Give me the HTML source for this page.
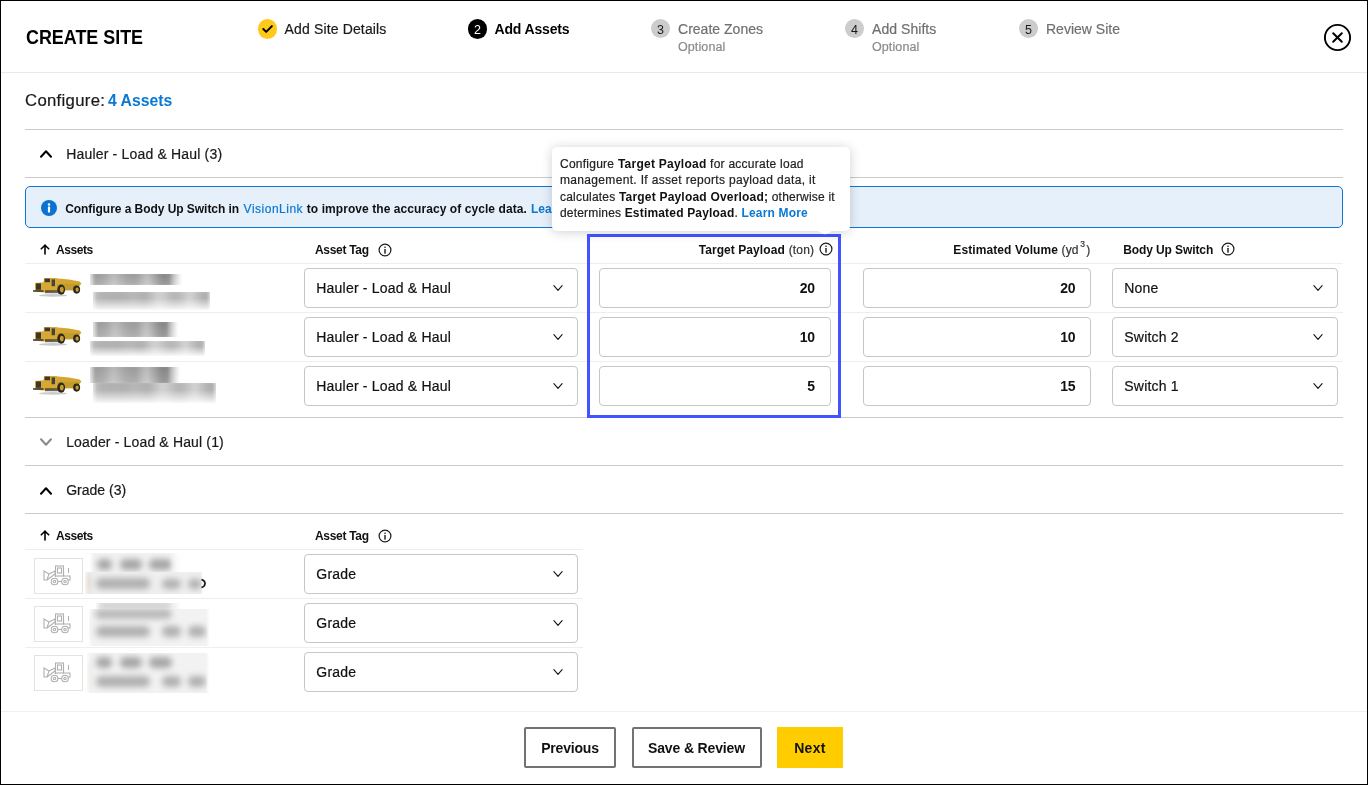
<!DOCTYPE html>
<html><head><meta charset="utf-8"><title>Create Site</title>
<style>
html,body{margin:0;padding:0;}
body{width:1368px;height:785px;overflow:hidden;position:relative;background:#fff;font-family:"Liberation Sans", sans-serif;}
.t{position:absolute;white-space:nowrap;font-family:"Liberation Sans", sans-serif;}
.b{position:absolute;}
b{font-weight:700;color:#111;-webkit-text-stroke:0;}
.root{position:absolute;left:0;top:0;width:1368px;height:785px;overflow:hidden;background:#fff;will-change:transform;}
.frame{position:absolute;left:0;top:0;width:1368px;height:785px;box-sizing:border-box;border:1px solid #000;pointer-events:none;}
</style></head>
<body>
<div class="root">
<div class="t" style="left:25.60px;top:26.97px;font-size:20px;line-height:20px;font-weight:700;color:#000;letter-spacing:0px;transform:scaleX(0.895);transform-origin:0 0;">CREATE SITE</div>
<div class="b" style="left:257.5px;top:19.15px;width:19.5px;height:19.5px;border-radius:50%;background:#ffc91a"></div>
<svg class="b" style="left:258px;top:19.4px;" width="19" height="19" viewBox="0 0 19 19"><polyline points="5.3,10 8.2,12.9 13.9,7.1" fill="none" stroke="#000" stroke-width="2" stroke-linecap="round" stroke-linejoin="round"/></svg>
<div class="t" style="left:284.50px;top:22.05px;font-size:14px;line-height:14px;font-weight:400;color:#1a1a1a;letter-spacing:0.15px;-webkit-text-stroke:0.2px currentColor;">Add Site Details</div>
<div class="b" style="left:467.75px;top:19.45px;width:19.5px;height:19.5px;border-radius:50%;background:#000;"></div>
<div class="t" style="left:467.75px;top:21.05px;width:19.5px;height:19.5px;line-height:19.5px;text-align:center;font-size:12.5px;font-weight:400;color:#fff">2</div>
<div class="t" style="left:494.50px;top:22.05px;font-size:14px;line-height:14px;font-weight:700;color:#000;letter-spacing:-0.15px;">Add Assets</div>
<div class="b" style="left:651.0px;top:19.4px;width:19px;height:19px;border-radius:50%;background:#cccccc;"></div>
<div class="t" style="left:651.0px;top:21.0px;width:19px;height:19px;line-height:19px;text-align:center;font-size:12.5px;font-weight:400;color:#1a1a1a">3</div>
<div class="t" style="left:678.00px;top:22.05px;font-size:14px;line-height:14px;font-weight:400;color:#707070;letter-spacing:0.02px;-webkit-text-stroke:0.2px currentColor;">Create Zones</div>
<div class="t" style="left:678.00px;top:41.42px;font-size:12.5px;line-height:12.5px;font-weight:400;color:#8a8a8a;letter-spacing:0.1px;-webkit-text-stroke:0.2px currentColor;">Optional</div>
<div class="b" style="left:845.0px;top:19.4px;width:19px;height:19px;border-radius:50%;background:#cccccc;"></div>
<div class="t" style="left:845.0px;top:21.0px;width:19px;height:19px;line-height:19px;text-align:center;font-size:12.5px;font-weight:400;color:#1a1a1a">4</div>
<div class="t" style="left:872.00px;top:22.05px;font-size:14px;line-height:14px;font-weight:400;color:#707070;letter-spacing:0.05px;-webkit-text-stroke:0.2px currentColor;">Add Shifts</div>
<div class="t" style="left:872.00px;top:41.42px;font-size:12.5px;line-height:12.5px;font-weight:400;color:#8a8a8a;letter-spacing:0.1px;-webkit-text-stroke:0.2px currentColor;">Optional</div>
<div class="b" style="left:1019.0px;top:19.4px;width:19px;height:19px;border-radius:50%;background:#cccccc;"></div>
<div class="t" style="left:1019.0px;top:21.0px;width:19px;height:19px;line-height:19px;text-align:center;font-size:12.5px;font-weight:400;color:#1a1a1a">5</div>
<div class="t" style="left:1046.00px;top:22.05px;font-size:14px;line-height:14px;font-weight:400;color:#707070;letter-spacing:0.0px;-webkit-text-stroke:0.2px currentColor;">Review Site</div>
<svg class="b" style="left:1322px;top:22px;" width="31" height="31" viewBox="0 0 31 31"><circle cx="15.5" cy="15.5" r="12.6" fill="none" stroke="#000" stroke-width="1.9"/><path d="M11.2 11.2 L19.8 19.8 M19.8 11.2 L11.2 19.8" stroke="#000" stroke-width="2" stroke-linecap="round"/></svg>
<div class="b" style="left:0px;top:72px;width:1368px;height:1px;background:#e9e9e9"></div>
<div class="t" style="left:25.30px;top:92.56px;font-size:16px;line-height:16px;font-weight:400;color:#1a1a1a;letter-spacing:0.3px;transform:scaleX(1.045);transform-origin:0 0;-webkit-text-stroke:0.2px currentColor;">Configure:</div>
<div class="t" style="left:108.30px;top:92.56px;font-size:16px;line-height:16px;font-weight:700;color:#0a78d4;letter-spacing:0px;transform:scaleX(0.985);transform-origin:0 0;">4 Assets</div>
<div class="b" style="left:25px;top:129px;width:1318px;height:1px;background:#cbcbcb"></div>
<svg class="b" style="left:38px;top:146.2px;" width="16" height="16" viewBox="0 0 16 16"><polyline points="3.0,10.75 8,5.25 13.0,10.75" fill="none" stroke="#000" stroke-width="2" stroke-linecap="round" stroke-linejoin="round"/></svg>
<div class="t" style="left:66.20px;top:147.25px;font-size:14px;line-height:14px;font-weight:400;color:#1a1a1a;letter-spacing:0.18px;-webkit-text-stroke:0.2px currentColor;">Hauler - Load &amp; Haul (3)</div>
<div class="b" style="left:25px;top:177px;width:1318px;height:1px;background:#cbcbcb"></div>
<div class="b" style="left:25px;top:186px;width:1318px;height:42px;box-sizing:border-box;border:1.5px solid #0f74d4;border-radius:5px;background:#e6f0fa"></div>
<svg class="b" style="left:41px;top:200px;" width="16" height="16" viewBox="0 0 16 16"><circle cx="8" cy="8" r="8" fill="#0b72d0"/><rect x="6.9" y="6.6" width="2.2" height="5.8" rx="0.3" fill="#fff"/><circle cx="8" cy="4.4" r="1.25" fill="#fff"/></svg>
<div class="t" style="left:65.20px;top:202.84px;font-size:12px;line-height:12px;font-weight:700;color:#111;letter-spacing:-0.05px;">Configure a Body Up Switch in</div>
<div class="t" style="left:243.60px;top:202.84px;font-size:12px;line-height:12px;font-weight:400;color:#0a78d4;letter-spacing:0.5px;-webkit-text-stroke:0.2px currentColor;">VisionLink</div>
<div class="t" style="left:306.80px;top:202.84px;font-size:12px;line-height:12px;font-weight:700;color:#111;letter-spacing:0.07px;">to improve the accuracy of cycle data.</div>
<div class="t" style="left:531.00px;top:202.84px;font-size:12px;line-height:12px;font-weight:700;color:#0a78d4;letter-spacing:0.0px;">Learn More</div>
<svg class="b" style="left:39.5px;top:243.8px;" width="10" height="11" viewBox="0 0 10 11"><path d="M5 1.2 V10" stroke="#000" stroke-width="1.6" stroke-linecap="round"/><polyline points="1.3,4.8 5,1.2 8.7,4.8" fill="none" stroke="#000" stroke-width="1.6" stroke-linecap="round" stroke-linejoin="round"/></svg>
<div class="t" style="left:56.00px;top:243.64px;font-size:12px;line-height:12px;font-weight:700;color:#111;letter-spacing:-0.43px;">Assets</div>
<div class="t" style="left:315.00px;top:243.64px;font-size:12px;line-height:12px;font-weight:700;color:#111;letter-spacing:-0.3px;">Asset Tag</div>
<svg class="b" style="left:377.0px;top:241.9px;" width="16" height="16" viewBox="0 0 16 16"><circle cx="8.0" cy="8.0" r="5.9" fill="none" stroke="#1a1a1a" stroke-width="1.2"/><rect x="7.3" y="7.0" width="1.4" height="4.7" fill="#1a1a1a"/><rect x="7.3" y="4.6" width="1.4" height="1.3" fill="#1a1a1a"/></svg>
<div class="t" style="left:698.70px;top:243.64px;font-size:12px;line-height:12px;font-weight:700;color:#111;letter-spacing:0.07px;">Target Payload</div>
<div class="t" style="left:788.70px;top:243.64px;font-size:12px;line-height:12px;font-weight:400;color:#333;letter-spacing:0.16px;-webkit-text-stroke:0.2px currentColor;">(ton)</div>
<svg class="b" style="left:818.0px;top:240.9px;" width="16" height="16" viewBox="0 0 16 16"><circle cx="8.0" cy="8.0" r="5.9" fill="none" stroke="#1a1a1a" stroke-width="1.2"/><rect x="7.3" y="7.0" width="1.4" height="4.7" fill="#1a1a1a"/><rect x="7.3" y="4.6" width="1.4" height="1.3" fill="#1a1a1a"/></svg>
<div class="t" style="left:953.30px;top:243.64px;font-size:12px;line-height:12px;font-weight:700;color:#111;letter-spacing:0.1px;">Estimated Volume</div>
<div class="t" style="left:1061.60px;top:243.64px;font-size:12px;line-height:12px;font-weight:400;color:#333;letter-spacing:0.1px;-webkit-text-stroke:0.2px currentColor;">(yd</div>
<div class="t" style="left:1080.30px;top:240.40px;font-size:8.5px;line-height:8.5px;font-weight:400;color:#333;letter-spacing:0px;-webkit-text-stroke:0.2px currentColor;">3</div>
<div class="t" style="left:1086.20px;top:243.64px;font-size:12px;line-height:12px;font-weight:400;color:#333;letter-spacing:0px;-webkit-text-stroke:0.2px currentColor;">)</div>
<div class="t" style="left:1123.20px;top:243.64px;font-size:12px;line-height:12px;font-weight:700;color:#111;letter-spacing:-0.1px;">Body Up Switch</div>
<svg class="b" style="left:1220.0px;top:240.9px;" width="16" height="16" viewBox="0 0 16 16"><circle cx="8.0" cy="8.0" r="5.9" fill="none" stroke="#1a1a1a" stroke-width="1.2"/><rect x="7.3" y="7.0" width="1.4" height="4.7" fill="#1a1a1a"/><rect x="7.3" y="4.6" width="1.4" height="1.3" fill="#1a1a1a"/></svg>
<div class="b" style="left:25px;top:263px;width:1318px;height:1px;background:#eeeeee"></div>
<svg class="b" style="left:32px;top:276px;" width="51" height="22" viewBox="0 0 51 22">
<g transform="translate(1,1)">
<ellipse cx="20" cy="18.4" rx="14" ry="1.3" fill="#8a8a8a" opacity="0.45"/>
<path d="M25 1.4 L36 2.6 L46.6 4.4 L48.4 6.4 L46.8 8.8 L40 10.4 L27 11 Z" fill="#d3a531"/>
<path d="M2 6 L10.6 5.2 L11 0.9 L23.5 0.9 L27 2.6 L27.5 13.8 L10 15.6 L2 14.6 Z" fill="#d7a834"/>
<rect x="24" y="7" width="22" height="6.4" fill="#c49b2d"/>
<rect x="12" y="13.2" width="18" height="3" fill="#3a3529" opacity="0.75"/>
<rect x="3" y="6.4" width="5" height="6.4" fill="#3b372c"/>
<rect x="0" y="13.3" width="10.5" height="1.4" fill="#2a2a25"/>
<rect x="11.6" y="1.6" width="5.4" height="3.6" fill="#3a3a33"/>
<rect x="18.6" y="2.4" width="3.4" height="6.8" fill="#45443a"/>
<ellipse cx="28.2" cy="12.6" rx="3.9" ry="5.1" fill="#2b271d"/><ellipse cx="28.8" cy="12.6" rx="1.9" ry="2.8" fill="#c89d2c"/>
<ellipse cx="43.6" cy="12.6" rx="3.5" ry="4.1" fill="#2b271d"/><ellipse cx="44.1" cy="12.6" rx="1.6" ry="2.2" fill="#c89d2c"/>
</g>
</svg>
<div class="b" style="left:90px;top:273.8px;width:92.4px;height:11.7px;overflow:hidden;-webkit-mask-image:linear-gradient(90deg, rgba(0,0,0,0.35) 0px, #000 5px, #000 79.5px, rgba(0,0,0,0) 92.4px);mask-image:linear-gradient(90deg, rgba(0,0,0,0.35) 0px, #000 5px, #000 79.5px, rgba(0,0,0,0) 92.4px)"><div style="position:absolute;left:-5px;right:-5px;top:-3px;bottom:-3px;filter:blur(2.2px);background:linear-gradient(90deg,#c4c4c4 0%,#a2a2a2 12%,#adadad 20%,#c4c4c4 28%,#a8a8a8 40%,#a2a2a2 50%,#c8c8c8 61%,#8f8f8f 75%,#8a8a8a 80%,#b8b8b8 90%,#e0e0e0 100%)"></div><div style="position:absolute;left:0;right:0;top:0;bottom:0;background:linear-gradient(180deg,rgba(0,0,0,0.06),rgba(255,255,255,0.12))"></div></div>
<div class="b" style="left:93.2px;top:292px;width:116.7px;height:17.7px;overflow:hidden;-webkit-mask-image:linear-gradient(90deg, rgba(0,0,0,0.5) 0px, #000 4px, #000 113.7px, rgba(0,0,0,0.6) 116.7px);mask-image:linear-gradient(90deg, rgba(0,0,0,0.5) 0px, #000 4px, #000 113.7px, rgba(0,0,0,0.6) 116.7px)"><div style="position:absolute;left:-5px;right:-5px;top:-3px;bottom:-3px;filter:blur(2.5px);background:linear-gradient(90deg,#cfcfcf 0%,#b0b0b0 10%,#aeaeae 28%,#b6b6b6 36%,#acacac 45%,#d2d2d2 56%,#b2b2b2 68%,#bcbcbc 74%,#d4d4d4 80%,#a8a8a8 92%,#c4c4c4 100%)"></div><div style="position:absolute;left:0;right:0;top:0;bottom:0;background:linear-gradient(180deg,rgba(255,255,255,0) 0%,rgba(255,255,255,0.05) 35%,rgba(255,255,255,0.9) 100%)"></div></div>
<div class="b" style="left:304px;top:268px;width:274px;height:40px;box-sizing:border-box;border:1px solid #c6c6c6;border-radius:4px;background:#fff"></div>
<div class="t" style="left:316.30px;top:281.05px;font-size:14px;line-height:14px;font-weight:400;color:#111;letter-spacing:0.2px;-webkit-text-stroke:0.2px currentColor;">Hauler - Load &amp; Haul</div>
<svg class="b" style="left:550px;top:280.2px;" width="16" height="16" viewBox="0 0 16 16"><polyline points="3.9000000000000004,5.7 8,10.3 12.1,5.7" fill="none" stroke="#111" stroke-width="1.1" stroke-linecap="round" stroke-linejoin="round"/></svg>
<div class="b" style="left:599px;top:268px;width:232px;height:40px;box-sizing:border-box;border:1px solid #c6c6c6;border-radius:4px;background:#fff"></div>
<div class="t" style="right:553.00px;top:281.05px;font-size:14px;line-height:14px;font-weight:700;color:#111;letter-spacing:-0.1px;">20</div>
<div class="b" style="left:863px;top:268px;width:228px;height:40px;box-sizing:border-box;border:1px solid #c6c6c6;border-radius:4px;background:#fff"></div>
<div class="t" style="right:292.50px;top:281.05px;font-size:14px;line-height:14px;font-weight:700;color:#111;letter-spacing:-0.1px;">20</div>
<div class="b" style="left:1112px;top:268px;width:226px;height:40px;box-sizing:border-box;border:1px solid #c6c6c6;border-radius:4px;background:#fff"></div>
<div class="t" style="left:1124.30px;top:281.05px;font-size:14px;line-height:14px;font-weight:400;color:#111;letter-spacing:0.2px;-webkit-text-stroke:0.2px currentColor;">None</div>
<svg class="b" style="left:1310px;top:280.2px;" width="16" height="16" viewBox="0 0 16 16"><polyline points="3.9000000000000004,5.7 8,10.3 12.1,5.7" fill="none" stroke="#111" stroke-width="1.1" stroke-linecap="round" stroke-linejoin="round"/></svg>
<svg class="b" style="left:32px;top:325px;" width="51" height="22" viewBox="0 0 51 22">
<g transform="translate(1,1)">
<ellipse cx="20" cy="18.4" rx="14" ry="1.3" fill="#8a8a8a" opacity="0.45"/>
<path d="M25 1.4 L36 2.6 L46.6 4.4 L48.4 6.4 L46.8 8.8 L40 10.4 L27 11 Z" fill="#d3a531"/>
<path d="M2 6 L10.6 5.2 L11 0.9 L23.5 0.9 L27 2.6 L27.5 13.8 L10 15.6 L2 14.6 Z" fill="#d7a834"/>
<rect x="24" y="7" width="22" height="6.4" fill="#c49b2d"/>
<rect x="12" y="13.2" width="18" height="3" fill="#3a3529" opacity="0.75"/>
<rect x="3" y="6.4" width="5" height="6.4" fill="#3b372c"/>
<rect x="0" y="13.3" width="10.5" height="1.4" fill="#2a2a25"/>
<rect x="11.6" y="1.6" width="5.4" height="3.6" fill="#3a3a33"/>
<rect x="18.6" y="2.4" width="3.4" height="6.8" fill="#45443a"/>
<ellipse cx="28.2" cy="12.6" rx="3.9" ry="5.1" fill="#2b271d"/><ellipse cx="28.8" cy="12.6" rx="1.9" ry="2.8" fill="#c89d2c"/>
<ellipse cx="43.6" cy="12.6" rx="3.5" ry="4.1" fill="#2b271d"/><ellipse cx="44.1" cy="12.6" rx="1.6" ry="2.2" fill="#c89d2c"/>
</g>
</svg>
<div class="b" style="left:93.2px;top:321.8px;width:85.5px;height:14.8px;overflow:hidden;-webkit-mask-image:linear-gradient(90deg, rgba(0,0,0,0.35) 0px, #000 5px, #000 73.5px, rgba(0,0,0,0) 85.49999999999999px);mask-image:linear-gradient(90deg, rgba(0,0,0,0.35) 0px, #000 5px, #000 73.5px, rgba(0,0,0,0) 85.49999999999999px)"><div style="position:absolute;left:-5px;right:-5px;top:-3px;bottom:-3px;filter:blur(2.2px);background:linear-gradient(90deg,#c4c4c4 0%,#a2a2a2 12%,#adadad 20%,#c4c4c4 28%,#a8a8a8 40%,#a2a2a2 50%,#c8c8c8 61%,#8f8f8f 75%,#8a8a8a 80%,#b8b8b8 90%,#e0e0e0 100%)"></div><div style="position:absolute;left:0;right:0;top:0;bottom:0;background:linear-gradient(180deg,rgba(0,0,0,0.06),rgba(255,255,255,0.12))"></div></div>
<div class="b" style="left:90px;top:340.9px;width:114.7px;height:14.9px;overflow:hidden;-webkit-mask-image:linear-gradient(90deg, rgba(0,0,0,0.5) 0px, #000 4px, #000 111.7px, rgba(0,0,0,0.6) 114.69999999999999px);mask-image:linear-gradient(90deg, rgba(0,0,0,0.5) 0px, #000 4px, #000 111.7px, rgba(0,0,0,0.6) 114.69999999999999px)"><div style="position:absolute;left:-5px;right:-5px;top:-3px;bottom:-3px;filter:blur(2.5px);background:linear-gradient(90deg,#cfcfcf 0%,#b0b0b0 10%,#aeaeae 28%,#b6b6b6 36%,#acacac 45%,#d2d2d2 56%,#b2b2b2 68%,#bcbcbc 74%,#d4d4d4 80%,#a8a8a8 92%,#c4c4c4 100%)"></div><div style="position:absolute;left:0;right:0;top:0;bottom:0;background:linear-gradient(180deg,rgba(255,255,255,0) 0%,rgba(255,255,255,0.05) 35%,rgba(255,255,255,0.9) 100%)"></div></div>
<div class="b" style="left:304px;top:317px;width:274px;height:40px;box-sizing:border-box;border:1px solid #c6c6c6;border-radius:4px;background:#fff"></div>
<div class="t" style="left:316.30px;top:330.05px;font-size:14px;line-height:14px;font-weight:400;color:#111;letter-spacing:0.2px;-webkit-text-stroke:0.2px currentColor;">Hauler - Load &amp; Haul</div>
<svg class="b" style="left:550px;top:329.2px;" width="16" height="16" viewBox="0 0 16 16"><polyline points="3.9000000000000004,5.7 8,10.3 12.1,5.7" fill="none" stroke="#111" stroke-width="1.1" stroke-linecap="round" stroke-linejoin="round"/></svg>
<div class="b" style="left:599px;top:317px;width:232px;height:40px;box-sizing:border-box;border:1px solid #c6c6c6;border-radius:4px;background:#fff"></div>
<div class="t" style="right:553.00px;top:330.05px;font-size:14px;line-height:14px;font-weight:700;color:#111;letter-spacing:-0.1px;">10</div>
<div class="b" style="left:863px;top:317px;width:228px;height:40px;box-sizing:border-box;border:1px solid #c6c6c6;border-radius:4px;background:#fff"></div>
<div class="t" style="right:292.50px;top:330.05px;font-size:14px;line-height:14px;font-weight:700;color:#111;letter-spacing:-0.1px;">10</div>
<div class="b" style="left:1112px;top:317px;width:226px;height:40px;box-sizing:border-box;border:1px solid #c6c6c6;border-radius:4px;background:#fff"></div>
<div class="t" style="left:1124.30px;top:330.05px;font-size:14px;line-height:14px;font-weight:400;color:#111;letter-spacing:0.2px;-webkit-text-stroke:0.2px currentColor;">Switch 2</div>
<svg class="b" style="left:1310px;top:329.2px;" width="16" height="16" viewBox="0 0 16 16"><polyline points="3.9000000000000004,5.7 8,10.3 12.1,5.7" fill="none" stroke="#111" stroke-width="1.1" stroke-linecap="round" stroke-linejoin="round"/></svg>
<svg class="b" style="left:32px;top:374px;" width="51" height="22" viewBox="0 0 51 22">
<g transform="translate(1,1)">
<ellipse cx="20" cy="18.4" rx="14" ry="1.3" fill="#8a8a8a" opacity="0.45"/>
<path d="M25 1.4 L36 2.6 L46.6 4.4 L48.4 6.4 L46.8 8.8 L40 10.4 L27 11 Z" fill="#d3a531"/>
<path d="M2 6 L10.6 5.2 L11 0.9 L23.5 0.9 L27 2.6 L27.5 13.8 L10 15.6 L2 14.6 Z" fill="#d7a834"/>
<rect x="24" y="7" width="22" height="6.4" fill="#c49b2d"/>
<rect x="12" y="13.2" width="18" height="3" fill="#3a3529" opacity="0.75"/>
<rect x="3" y="6.4" width="5" height="6.4" fill="#3b372c"/>
<rect x="0" y="13.3" width="10.5" height="1.4" fill="#2a2a25"/>
<rect x="11.6" y="1.6" width="5.4" height="3.6" fill="#3a3a33"/>
<rect x="18.6" y="2.4" width="3.4" height="6.8" fill="#45443a"/>
<ellipse cx="28.2" cy="12.6" rx="3.9" ry="5.1" fill="#2b271d"/><ellipse cx="28.8" cy="12.6" rx="1.9" ry="2.8" fill="#c89d2c"/>
<ellipse cx="43.6" cy="12.6" rx="3.5" ry="4.1" fill="#2b271d"/><ellipse cx="44.1" cy="12.6" rx="1.6" ry="2.2" fill="#c89d2c"/>
</g>
</svg>
<div class="b" style="left:90px;top:366.9px;width:90.5px;height:16.2px;overflow:hidden;-webkit-mask-image:linear-gradient(90deg, rgba(0,0,0,0.35) 0px, #000 5px, #000 77.8px, rgba(0,0,0,0) 90.5px);mask-image:linear-gradient(90deg, rgba(0,0,0,0.35) 0px, #000 5px, #000 77.8px, rgba(0,0,0,0) 90.5px)"><div style="position:absolute;left:-5px;right:-5px;top:-3px;bottom:-3px;filter:blur(2.2px);background:linear-gradient(90deg,#c4c4c4 0%,#a2a2a2 12%,#adadad 20%,#c4c4c4 28%,#a8a8a8 40%,#a2a2a2 50%,#c8c8c8 61%,#8f8f8f 75%,#8a8a8a 80%,#b8b8b8 90%,#e0e0e0 100%)"></div><div style="position:absolute;left:0;right:0;top:0;bottom:0;background:linear-gradient(180deg,rgba(0,0,0,0.06),rgba(255,255,255,0.12))"></div></div>
<div class="b" style="left:93.2px;top:383.1px;width:122.6px;height:20.4px;overflow:hidden;-webkit-mask-image:linear-gradient(90deg, rgba(0,0,0,0.5) 0px, #000 4px, #000 119.6px, rgba(0,0,0,0.6) 122.60000000000001px);mask-image:linear-gradient(90deg, rgba(0,0,0,0.5) 0px, #000 4px, #000 119.6px, rgba(0,0,0,0.6) 122.60000000000001px)"><div style="position:absolute;left:-5px;right:-5px;top:-3px;bottom:-3px;filter:blur(2.5px);background:linear-gradient(90deg,#cfcfcf 0%,#b0b0b0 10%,#aeaeae 28%,#b6b6b6 36%,#acacac 45%,#d2d2d2 56%,#b2b2b2 68%,#bcbcbc 74%,#d4d4d4 80%,#a8a8a8 92%,#c4c4c4 100%)"></div><div style="position:absolute;left:0;right:0;top:0;bottom:0;background:linear-gradient(180deg,rgba(255,255,255,0) 0%,rgba(255,255,255,0.05) 35%,rgba(255,255,255,0.9) 100%)"></div></div>
<div class="b" style="left:304px;top:366px;width:274px;height:40px;box-sizing:border-box;border:1px solid #c6c6c6;border-radius:4px;background:#fff"></div>
<div class="t" style="left:316.30px;top:379.05px;font-size:14px;line-height:14px;font-weight:400;color:#111;letter-spacing:0.2px;-webkit-text-stroke:0.2px currentColor;">Hauler - Load &amp; Haul</div>
<svg class="b" style="left:550px;top:378.2px;" width="16" height="16" viewBox="0 0 16 16"><polyline points="3.9000000000000004,5.7 8,10.3 12.1,5.7" fill="none" stroke="#111" stroke-width="1.1" stroke-linecap="round" stroke-linejoin="round"/></svg>
<div class="b" style="left:599px;top:366px;width:232px;height:40px;box-sizing:border-box;border:1px solid #c6c6c6;border-radius:4px;background:#fff"></div>
<div class="t" style="right:553.00px;top:379.05px;font-size:14px;line-height:14px;font-weight:700;color:#111;letter-spacing:-0.1px;">5</div>
<div class="b" style="left:863px;top:366px;width:228px;height:40px;box-sizing:border-box;border:1px solid #c6c6c6;border-radius:4px;background:#fff"></div>
<div class="t" style="right:292.50px;top:379.05px;font-size:14px;line-height:14px;font-weight:700;color:#111;letter-spacing:-0.1px;">15</div>
<div class="b" style="left:1112px;top:366px;width:226px;height:40px;box-sizing:border-box;border:1px solid #c6c6c6;border-radius:4px;background:#fff"></div>
<div class="t" style="left:1124.30px;top:379.05px;font-size:14px;line-height:14px;font-weight:400;color:#111;letter-spacing:0.2px;-webkit-text-stroke:0.2px currentColor;">Switch 1</div>
<svg class="b" style="left:1310px;top:378.2px;" width="16" height="16" viewBox="0 0 16 16"><polyline points="3.9000000000000004,5.7 8,10.3 12.1,5.7" fill="none" stroke="#111" stroke-width="1.1" stroke-linecap="round" stroke-linejoin="round"/></svg>
<div class="b" style="left:25px;top:312px;width:1318px;height:1px;background:#eeeeee"></div>
<div class="b" style="left:25px;top:361px;width:1318px;height:1px;background:#eeeeee"></div>
<div class="b" style="left:25px;top:417px;width:1318px;height:1px;background:#cbcbcb"></div>
<div class="b" style="left:587px;top:234px;width:254px;height:184px;box-sizing:border-box;border:3px solid #4154ff"></div>
<svg class="b" style="left:38px;top:434px;" width="16" height="16" viewBox="0 0 16 16"><polyline points="3.0,5.25 8,10.75 13.0,5.25" fill="none" stroke="#8a8a8a" stroke-width="2" stroke-linecap="round" stroke-linejoin="round"/></svg>
<div class="t" style="left:66.20px;top:434.85px;font-size:14px;line-height:14px;font-weight:400;color:#1a1a1a;letter-spacing:0.15px;-webkit-text-stroke:0.2px currentColor;">Loader - Load &amp; Haul (1)</div>
<div class="b" style="left:25px;top:465px;width:1318px;height:1px;background:#cbcbcb"></div>
<svg class="b" style="left:38px;top:482.5px;" width="16" height="16" viewBox="0 0 16 16"><polyline points="3.0,10.75 8,5.25 13.0,10.75" fill="none" stroke="#000" stroke-width="2" stroke-linecap="round" stroke-linejoin="round"/></svg>
<div class="t" style="left:66.20px;top:483.15px;font-size:14px;line-height:14px;font-weight:400;color:#1a1a1a;letter-spacing:0.0px;-webkit-text-stroke:0.2px currentColor;">Grade (3)</div>
<div class="b" style="left:25px;top:513px;width:1318px;height:1px;background:#cbcbcb"></div>
<svg class="b" style="left:39.5px;top:530px;" width="10" height="11" viewBox="0 0 10 11"><path d="M5 1.2 V10" stroke="#000" stroke-width="1.6" stroke-linecap="round"/><polyline points="1.3,4.8 5,1.2 8.7,4.8" fill="none" stroke="#000" stroke-width="1.6" stroke-linecap="round" stroke-linejoin="round"/></svg>
<div class="t" style="left:56.00px;top:529.84px;font-size:12px;line-height:12px;font-weight:700;color:#111;letter-spacing:-0.43px;">Assets</div>
<div class="t" style="left:315.00px;top:529.84px;font-size:12px;line-height:12px;font-weight:700;color:#111;letter-spacing:-0.3px;">Asset Tag</div>
<svg class="b" style="left:377.0px;top:528.1px;" width="16" height="16" viewBox="0 0 16 16"><circle cx="8.0" cy="8.0" r="5.9" fill="none" stroke="#1a1a1a" stroke-width="1.2"/><rect x="7.3" y="7.0" width="1.4" height="4.7" fill="#1a1a1a"/><rect x="7.3" y="4.6" width="1.4" height="1.3" fill="#1a1a1a"/></svg>
<div class="b" style="left:25px;top:549px;width:558px;height:1px;background:#eeeeee"></div>
<div class="b" style="left:33.5px;top:558px;width:49px;height:36px;box-sizing:border-box;border:1px solid #e3e3e3;background:#fff"></div>
<svg class="b" style="left:42.5px;top:565px;" width="31" height="21" viewBox="0 0 31 21"><g fill="none" stroke="#b0b0b0" stroke-width="1.1">
<rect x="12.5" y="1" width="8" height="10"/><rect x="14.5" y="3" width="4" height="5"/>
<path d="M1 6 L6 9 L4 15 L1 15 Z"/><path d="M6 9 L12 6 L12.5 12"/><path d="M4 15 L12 9"/>
<circle cx="11.5" cy="16.5" r="3.3"/><circle cx="11.5" cy="16.5" r="1.2"/><circle cx="22" cy="16.5" r="3.3"/><circle cx="22" cy="16.5" r="1.2"/><path d="M14.8 16.5 H18.7"/>
<path d="M20.5 6 V11 H27 V15 H25"/><path d="M25.5 3 V8"/></g></svg>
<div class="b" style="left:304px;top:554px;width:274px;height:40px;box-sizing:border-box;border:1px solid #c6c6c6;border-radius:4px;background:#fff"></div>
<div class="t" style="left:316.30px;top:567.05px;font-size:14px;line-height:14px;font-weight:400;color:#111;letter-spacing:0.2px;-webkit-text-stroke:0.2px currentColor;">Grade</div>
<svg class="b" style="left:550px;top:566.2px;" width="16" height="16" viewBox="0 0 16 16"><polyline points="3.9000000000000004,5.7 8,10.3 12.1,5.7" fill="none" stroke="#111" stroke-width="1.1" stroke-linecap="round" stroke-linejoin="round"/></svg>
<div class="b" style="left:33.5px;top:606px;width:49px;height:36px;box-sizing:border-box;border:1px solid #e3e3e3;background:#fff"></div>
<svg class="b" style="left:42.5px;top:613px;" width="31" height="21" viewBox="0 0 31 21"><g fill="none" stroke="#b0b0b0" stroke-width="1.1">
<rect x="12.5" y="1" width="8" height="10"/><rect x="14.5" y="3" width="4" height="5"/>
<path d="M1 6 L6 9 L4 15 L1 15 Z"/><path d="M6 9 L12 6 L12.5 12"/><path d="M4 15 L12 9"/>
<circle cx="11.5" cy="16.5" r="3.3"/><circle cx="11.5" cy="16.5" r="1.2"/><circle cx="22" cy="16.5" r="3.3"/><circle cx="22" cy="16.5" r="1.2"/><path d="M14.8 16.5 H18.7"/>
<path d="M20.5 6 V11 H27 V15 H25"/><path d="M25.5 3 V8"/></g></svg>
<div class="b" style="left:304px;top:603px;width:274px;height:40px;box-sizing:border-box;border:1px solid #c6c6c6;border-radius:4px;background:#fff"></div>
<div class="t" style="left:316.30px;top:616.05px;font-size:14px;line-height:14px;font-weight:400;color:#111;letter-spacing:0.2px;-webkit-text-stroke:0.2px currentColor;">Grade</div>
<svg class="b" style="left:550px;top:615.2px;" width="16" height="16" viewBox="0 0 16 16"><polyline points="3.9000000000000004,5.7 8,10.3 12.1,5.7" fill="none" stroke="#111" stroke-width="1.1" stroke-linecap="round" stroke-linejoin="round"/></svg>
<div class="b" style="left:33.5px;top:655px;width:49px;height:36px;box-sizing:border-box;border:1px solid #e3e3e3;background:#fff"></div>
<svg class="b" style="left:42.5px;top:662px;" width="31" height="21" viewBox="0 0 31 21"><g fill="none" stroke="#b0b0b0" stroke-width="1.1">
<rect x="12.5" y="1" width="8" height="10"/><rect x="14.5" y="3" width="4" height="5"/>
<path d="M1 6 L6 9 L4 15 L1 15 Z"/><path d="M6 9 L12 6 L12.5 12"/><path d="M4 15 L12 9"/>
<circle cx="11.5" cy="16.5" r="3.3"/><circle cx="11.5" cy="16.5" r="1.2"/><circle cx="22" cy="16.5" r="3.3"/><circle cx="22" cy="16.5" r="1.2"/><path d="M14.8 16.5 H18.7"/>
<path d="M20.5 6 V11 H27 V15 H25"/><path d="M25.5 3 V8"/></g></svg>
<div class="b" style="left:304px;top:652px;width:274px;height:40px;box-sizing:border-box;border:1px solid #c6c6c6;border-radius:4px;background:#fff"></div>
<div class="t" style="left:316.30px;top:665.05px;font-size:14px;line-height:14px;font-weight:400;color:#111;letter-spacing:0.2px;-webkit-text-stroke:0.2px currentColor;">Grade</div>
<svg class="b" style="left:550px;top:664.2px;" width="16" height="16" viewBox="0 0 16 16"><polyline points="3.9000000000000004,5.7 8,10.3 12.1,5.7" fill="none" stroke="#111" stroke-width="1.1" stroke-linecap="round" stroke-linejoin="round"/></svg>
<div class="b" style="left:90px;top:553px;width:91.0px;height:19.0px;overflow:hidden;-webkit-mask-image:linear-gradient(90deg, rgba(0,0,0,0.3) 0px, #000 4px, #000 79.0px, rgba(0,0,0,0) 91px);mask-image:linear-gradient(90deg, rgba(0,0,0,0.3) 0px, #000 4px, #000 79.0px, rgba(0,0,0,0) 91px)"><div style="position:absolute;left:-6px;top:-6px;right:-6px;bottom:-6px;filter:blur(3.0px);background:#f2f2f2"><div style="position:absolute;left:13.0px;top:12.0px;width:15.0px;height:11.0px;background:#a6a6a6;border-radius:5px"></div><div style="position:absolute;left:36.0px;top:12.0px;width:22.0px;height:11.0px;background:#a6a6a6;border-radius:5px"></div><div style="position:absolute;left:65.0px;top:12.0px;width:23.0px;height:11.0px;background:#a6a6a6;border-radius:5px"></div></div></div>
<div class="b" style="left:85px;top:572px;width:118.0px;height:22.0px;overflow:hidden;-webkit-mask-image:linear-gradient(90deg, rgba(0,0,0,0.3) 0px, #000 4px, #000 116.0px, rgba(0,0,0,0) 118px);mask-image:linear-gradient(90deg, rgba(0,0,0,0.3) 0px, #000 4px, #000 116.0px, rgba(0,0,0,0) 118px)"><div style="position:absolute;left:-6px;top:-6px;right:-6px;bottom:-6px;filter:blur(3.0px);background:#efefef"><div style="position:absolute;left:17.0px;top:12.0px;width:54.0px;height:11.0px;background:#b0b0b0;border-radius:5px"></div><div style="position:absolute;left:83.0px;top:13.0px;width:19.0px;height:10.0px;background:#b0b0b0;border-radius:5px"></div><div style="position:absolute;left:109.0px;top:13.0px;width:14.0px;height:10.0px;background:#b0b0b0;border-radius:5px"></div><div style="position:absolute;left:1.0px;top:6.0px;width:10.0px;height:22.0px;background:#e2d8cc;border-radius:5px"></div></div></div>
<svg class="b" style="left:199px;top:578px" width="8" height="11" viewBox="0 0 8 11"><path d="M2.5 1.5 Q6 2.5 6 5.5 Q6 8.5 2.5 9.5" fill="none" stroke="#111" stroke-width="1.6"/></svg>
<div class="b" style="left:96px;top:603px;width:85.0px;height:6.0px;overflow:hidden;-webkit-mask-image:linear-gradient(90deg, rgba(0,0,0,0.3) 0px, #000 4px, #000 73.0px, rgba(0,0,0,0) 85px);mask-image:linear-gradient(90deg, rgba(0,0,0,0.3) 0px, #000 4px, #000 73.0px, rgba(0,0,0,0) 85px)"><div style="position:absolute;left:-6px;top:-6px;right:-6px;bottom:-6px;filter:blur(3.0px);background:#e8e8e8"><div style="position:absolute;left:10.0px;top:3.0px;width:70.0px;height:12.0px;background:#d6d6d6;border-radius:5px"></div></div></div>
<div class="b" style="left:89px;top:609px;width:121.0px;height:37.0px;overflow:hidden;-webkit-mask-image:linear-gradient(90deg, rgba(0,0,0,0.3) 0px, #000 4px, #000 117.0px, rgba(0,0,0,0) 121px);mask-image:linear-gradient(90deg, rgba(0,0,0,0.3) 0px, #000 4px, #000 117.0px, rgba(0,0,0,0) 121px)"><div style="position:absolute;left:-6px;top:-6px;right:-6px;bottom:-6px;filter:blur(3.0px);background:#f2f2f2"><div style="position:absolute;left:12.0px;top:6.0px;width:77.0px;height:10.0px;background:#b8b8b8;border-radius:5px"></div><div style="position:absolute;left:13.0px;top:23.0px;width:54.0px;height:11.0px;background:#b0b0b0;border-radius:5px"></div><div style="position:absolute;left:79.0px;top:23.0px;width:19.0px;height:11.0px;background:#b0b0b0;border-radius:5px"></div><div style="position:absolute;left:105.0px;top:23.0px;width:18.0px;height:11.0px;background:#b0b0b0;border-radius:5px"></div><div style="position:absolute;left:-1.0px;top:8.0px;width:6.0px;height:29.0px;background:#e0d5c8;border-radius:5px"></div></div></div>
<div class="b" style="left:86.5px;top:653px;width:122.5px;height:40.0px;overflow:hidden;-webkit-mask-image:linear-gradient(90deg, rgba(0,0,0,0.3) 0px, #000 4px, #000 118.5px, rgba(0,0,0,0) 122.5px);mask-image:linear-gradient(90deg, rgba(0,0,0,0.3) 0px, #000 4px, #000 118.5px, rgba(0,0,0,0) 122.5px)"><div style="position:absolute;left:-6px;top:-6px;right:-6px;bottom:-6px;filter:blur(3.0px);background:#f2f2f2"><div style="position:absolute;left:15.5px;top:10.0px;width:16.0px;height:11.0px;background:#a6a6a6;border-radius:5px"></div><div style="position:absolute;left:39.5px;top:10.0px;width:22.0px;height:11.0px;background:#a6a6a6;border-radius:5px"></div><div style="position:absolute;left:68.5px;top:10.0px;width:23.0px;height:11.0px;background:#a6a6a6;border-radius:5px"></div><div style="position:absolute;left:15.5px;top:29.0px;width:54.0px;height:11.0px;background:#b0b0b0;border-radius:5px"></div><div style="position:absolute;left:81.5px;top:29.0px;width:19.0px;height:11.0px;background:#b0b0b0;border-radius:5px"></div><div style="position:absolute;left:107.5px;top:29.0px;width:18.0px;height:11.0px;background:#b0b0b0;border-radius:5px"></div><div style="position:absolute;left:-0.5px;top:13.0px;width:8.0px;height:30.0px;background:#e6ddd2;border-radius:5px"></div></div></div>
<div class="b" style="left:25px;top:598px;width:558px;height:1px;background:#eeeeee"></div>
<div class="b" style="left:25px;top:647px;width:558px;height:1px;background:#eeeeee"></div>
<div class="b" style="left:552px;top:147px;width:298px;height:84px;background:#fff;border-radius:5px;box-shadow:0 1px 11px rgba(30,40,65,0.22)"></div>
<svg class="b" style="left:815px;top:229px;" width="20" height="8" viewBox="0 0 20 8"><path d="M0 0 L7.5 4.5 Q10 6 12.5 4.5 L20 0 Z" fill="#fff"/></svg>
<div class="t" style="left:560.00px;top:157.94px;font-size:12px;line-height:12px;font-weight:400;color:#222;letter-spacing:0.25px;-webkit-text-stroke:0.2px currentColor;">Configure <b>Target Payload</b> for accurate load</div>
<div class="t" style="left:560.00px;top:174.44px;font-size:12px;line-height:12px;font-weight:400;color:#222;letter-spacing:0.33px;-webkit-text-stroke:0.2px currentColor;">management. If asset reports payload data, it</div>
<div class="t" style="left:560.00px;top:190.64px;font-size:12px;line-height:12px;font-weight:400;color:#222;letter-spacing:0.2px;-webkit-text-stroke:0.2px currentColor;">calculates <b>Target Payload Overload;</b> otherwise it</div>
<div class="t" style="left:560.00px;top:206.94px;font-size:12px;line-height:12px;font-weight:400;color:#222;letter-spacing:0.18px;-webkit-text-stroke:0.2px currentColor;">determines <b>Estimated Payload</b>. <b style="color:#0a78d4">Learn More</b></div>
<div class="b" style="left:0px;top:711px;width:1368px;height:1px;background:#efefef"></div>
<div class="b" style="left:524px;top:727px;width:92px;height:41px;box-sizing:border-box;border:2px solid #727272;border-radius:2px;background:#fff"></div>
<div class="t" style="left:524px;top:740.55px;width:92px;text-align:center;font-size:14px;line-height:14px;font-weight:700;color:#111;letter-spacing:-0.2px">Previous</div>
<div class="b" style="left:631.5px;top:727px;width:130px;height:41px;box-sizing:border-box;border:2px solid #727272;border-radius:2px;background:#fff"></div>
<div class="t" style="left:631.5px;top:740.55px;width:130px;text-align:center;font-size:14px;line-height:14px;font-weight:700;color:#111;letter-spacing:-0.15px">Save &amp; Review</div>
<div class="b" style="left:777.3px;top:727.3px;width:65.3px;height:41px;box-sizing:border-box;border:none;border-radius:0px;background:#ffcc00"></div>
<div class="t" style="left:777.3px;top:740.55px;width:65.3px;text-align:center;font-size:14px;line-height:14px;font-weight:700;color:#111;letter-spacing:0.3px">Next</div>
<div class="frame"></div>
</div>
</body></html>
